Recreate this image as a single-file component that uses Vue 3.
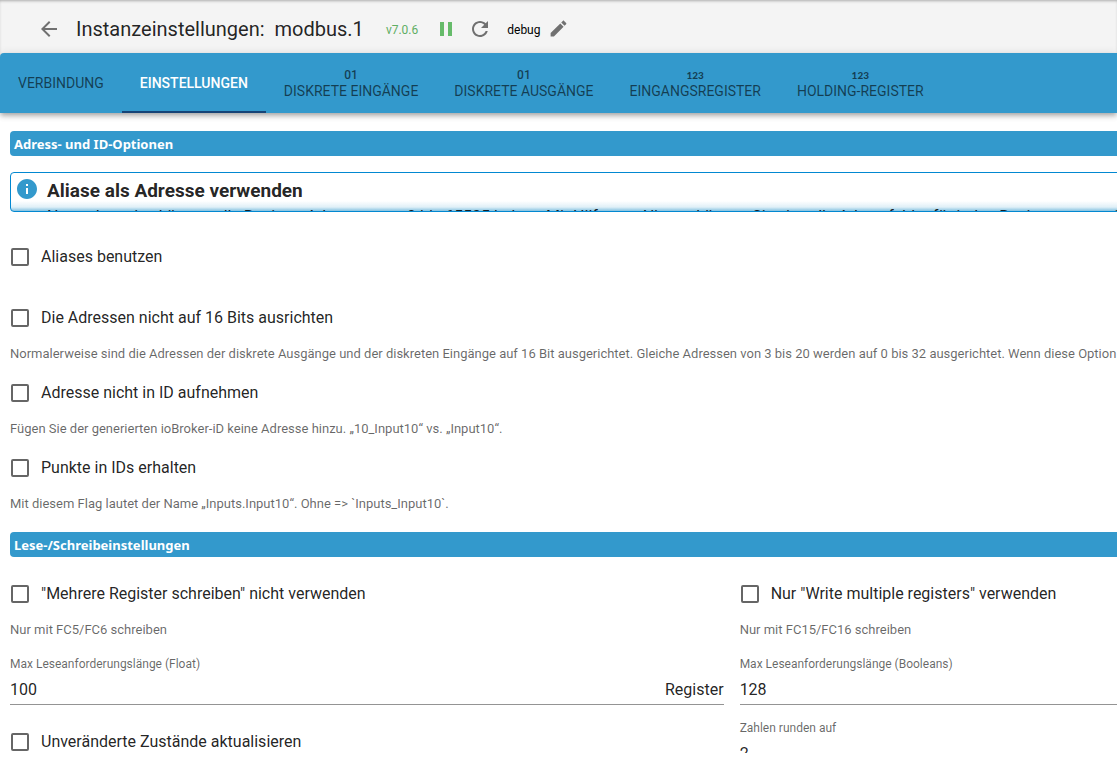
<script setup>
import { ref } from 'vue'

const tabs = [
  { label: 'Verbindung' },
  { label: 'Einstellungen' },
  { label: 'Diskrete Eingänge', mark: '01', kind: 'bits' },
  { label: 'Diskrete Ausgänge', mark: '01', kind: 'bits' },
  { label: 'Eingangsregister', mark: '123', kind: 'digits' },
  { label: 'Holding-Register', mark: '123', kind: 'digits' },
]
const active = ref(1)

const addressOptions = [
  {
    id: 'no-align',
    label: 'Die Adressen nicht auf 16 Bits ausrichten',
    help: 'Normalerweise sind die Adressen der diskrete Ausgänge und der diskreten Eingänge auf 16 Bit ausgerichtet. Gleiche Adressen von 3 bis 20 werden auf 0 bis 32 ausgerichtet. Wenn diese Option aktiviert ist, werden die Adressen nicht ausgerichtet.',
  },
  {
    id: 'no-address',
    label: 'Adresse nicht in ID aufnehmen',
    help: 'Fügen Sie der generierten ioBroker-iD keine Adresse hinzu. „10_Input10“ vs. „Input10“.',
  },
  {
    id: 'keep-dots',
    label: 'Punkte in IDs erhalten',
    help: 'Mit diesem Flag lautet der Name „Inputs.Input10“. Ohne => `Inputs_Input10`.',
  },
]

const maxFloat = ref('100')
const maxBool = ref('128')
const round = ref('2')
</script>

<template>
  <div class="page">
    <header class="toolbar">
      <button class="icon-btn back" aria-label="Zurück">
        <svg viewBox="0 0 24 24"><path d="M20 11H7.83l5.59-5.59L12 4l-8 8 8 8 1.41-1.41L7.83 13H20v-2z" /></svg>
      </button>
      <h1 class="title"><span>Instanzeinstellungen:</span><span>modbus.1</span></h1>
      <span class="version">v7.0.6</span>
      <button class="icon-btn pause" aria-label="Pause">
        <svg viewBox="0 0 24 24"><path d="M6 19h4V5H6v14zm8-14v14h4V5h-4z" /></svg>
      </button>
      <button class="icon-btn reload" aria-label="Neu starten">
        <svg viewBox="0 0 24 24"><path d="M17.65 6.35C16.2 4.9 14.21 4 12 4c-4.42 0-7.99 3.58-7.99 8s3.57 8 7.99 8c3.73 0 6.84-2.55 7.73-6h-2.08c-.82 2.33-3.04 4-5.65 4-3.31 0-6-2.69-6-6s2.69-6 6-6c1.66 0 3.14.69 4.22 1.78L13 11h7V4l-2.35 2.35z" /></svg>
      </button>
      <span class="level">debug</span>
      <button class="icon-btn edit" aria-label="Bearbeiten">
        <svg viewBox="0 0 24 24"><path d="M3 17.25V21h3.75L17.81 9.94l-3.75-3.75L3 17.25zM20.71 7.04c.39-.39.39-1.02 0-1.41l-2.34-2.34c-.39-.39-1.02-.39-1.41 0l-1.83 1.83 3.75 3.75 1.83-1.83z" /></svg>
      </button>
    </header>

    <nav class="tabs" role="tablist">
      <button
        v-for="(tab, i) in tabs"
        :key="tab.label"
        class="tab"
        :class="{ active: i === active }"
        role="tab"
        :aria-selected="i === active"
        @click="active = i"
      >
        <span v-if="tab.mark" class="mark" :class="tab.kind">{{ tab.mark }}</span>
        <span>{{ tab.label }}</span>
      </button>
    </nav>

    <main class="viewport">
      <div class="panel">
        <h2 class="section">Adress- und ID-Optionen</h2>

        <div class="alert">
          <svg class="info" viewBox="0 0 24 24"><path d="M12 2C6.48 2 2 6.48 2 12s4.48 10 10 10 10-4.48 10-10S17.52 2 12 2zm1 15h-2v-6h2v6zm0-8h-2V7h2v2z" /></svg>
          <div class="alert-body">
            <h3>Aliase als Adresse verwenden</h3>
            <p>Normalerweise können alle Register Adressen von 0 bis 65535 haben. Mit Hilfe von Aliasen können Sie virtuelle Adressfelder für jeden Registertyp von 0 bis 65535 definieren.</p>
          </div>
        </div>

        <div class="field first">
          <label class="check" for="aliases"><input id="aliases" type="checkbox" /><span>Aliases benutzen</span></label>
        </div>
        <div class="options">
          <div v-for="o in addressOptions" :key="o.id" class="field">
            <label class="check" :for="o.id"><input :id="o.id" type="checkbox" /><span>{{ o.label }}</span></label>
            <p class="help">{{ o.help }}</p>
          </div>
        </div>

        <h2 class="section">Lese-/Schreibeinstellungen</h2>

        <div class="columns">
          <div class="column">
            <div class="field">
              <label class="check" for="no-multi"><input id="no-multi" type="checkbox" /><span>"Mehrere Register schreiben" nicht verwenden</span></label>
              <p class="help">Nur mit FC5/FC6 schreiben</p>
            </div>
            <div class="text-field">
              <label for="max-float">Max Leseanforderungslänge (Float)</label>
              <div class="line"><input id="max-float" v-model="maxFloat" type="text" /><span>Register</span></div>
            </div>
            <div class="field last">
              <label class="check" for="unchanged"><input id="unchanged" type="checkbox" /><span>Unveränderte Zustände aktualisieren</span></label>
            </div>
          </div>
          <div class="column">
            <div class="field">
              <label class="check" for="only-multi"><input id="only-multi" type="checkbox" /><span>Nur "Write multiple registers" verwenden</span></label>
              <p class="help">Nur mit FC15/FC16 schreiben</p>
            </div>
            <div class="text-field">
              <label for="max-bool">Max Leseanforderungslänge (Booleans)</label>
              <div class="line"><input id="max-bool" v-model="maxBool" type="text" /></div>
            </div>
            <div class="text-field">
              <label for="round">Zahlen runden auf</label>
              <div class="line"><input id="round" v-model="round" type="text" /></div>
            </div>
          </div>
        </div>
      </div>
    </main>
  </div>
</template>

<style>
body {
  background: #fff;
}
</style>

<style scoped>
.page {
  display: flex;
  flex-direction: column;
  box-sizing: border-box;
  height: 100vh;
  padding-bottom: 12px;
  overflow: hidden;
  font-family: Roboto, "Liberation Sans", sans-serif;
  font-size: 16px;
  color: rgba(0, 0, 0, 0.87);
}
h1, h2, h3, p {
  margin: 0;
}
button {
  border: 0;
  padding: 0;
  background: none;
  font: inherit;
  color: inherit;
}

.toolbar {
  display: flex;
  flex: none;
  align-items: center;
  box-sizing: border-box;
  height: 61px;
  margin-bottom: -8px;
  padding: 4px 37px 8px;
  background: #f4f4f4;
  box-shadow: inset 0 2px 3px -1px rgba(0, 0, 0, 0.3);
}
.icon-btn {
  display: flex;
  width: 24px;
  height: 24px;
  color: #707070;
}
.icon-btn svg {
  width: 100%;
  fill: currentColor;
}
.title {
  display: flex;
  gap: 10px;
  margin-left: 15px;
  font-size: 20px;
  font-weight: 400;
  line-height: 32px;
}
.version {
  margin-left: 22px;
  padding-top: 3px;
  font-size: 12px;
  color: #5fae63;
}
.pause {
  margin-left: 16px;
  color: #66bb6a;
}
.reload {
  margin-left: 10px;
}
.level {
  margin-left: 15px;
  padding-top: 3px;
  font-size: 12px;
  color: #000;
}
.edit {
  width: 21px;
  height: 21px;
  margin-left: 8px;
}

.tabs {
  display: flex;
  flex: none;
  height: 60px;
  position: relative;
  border-radius: 4px 0 0 0;
  background: #3399cc;
  box-shadow: 0 2px 4px -1px rgba(0, 0, 0, 0.2), 0 4px 5px rgba(0, 0, 0, 0.14), 0 1px 10px rgba(0, 0, 0, 0.12);
}
.tab {
  display: flex;
  flex-direction: column;
  align-items: center;
  justify-content: center;
  box-sizing: border-box;
  padding: 0 18px;
  border-top: 2px solid transparent;
  border-bottom: 2px solid transparent;
  font-size: 14px;
  line-height: 17px;
  text-transform: uppercase;
  white-space: nowrap;
  color: rgba(0, 0, 0, 0.6);
}
.tab.active {
  border-bottom-color: #164477;
  font-weight: 500;
  color: #fff;
}
.mark {
  line-height: 16px;
  font-weight: 500;
}
.bits {
  font-size: 12px;
}
.digits {
  font-family: Lato, sans-serif;
  font-size: 10px;
  font-weight: 900;
}

.viewport {
  flex: 1;
  min-height: 0;
  overflow: hidden;
  position: relative;
  z-index: -1;
}
.panel {
  box-sizing: border-box;
  width: 131%;
  padding: 18px 10px 0;
}
.section {
  padding: 2px 4px 0;
  border-radius: 4px;
  background: #3399cc;
  font-family: "Noto Sans", "Open Sans", sans-serif;
  font-size: 13px;
  font-weight: 700;
  line-height: 23px;
  color: #fff;
}
.alert {
  display: flex;
  box-sizing: border-box;
  height: 40px;
  margin: 16px 0 24px;
  padding: 4px;
  border: 1px solid #0288d1;
  border-radius: 4px;
  overflow: hidden;
  background: linear-gradient(to top, rgba(51, 153, 204, 0.6), rgba(51, 153, 204, 0.15) 4px, transparent 10px);
}
.info {
  flex: none;
  width: 24px;
  height: 24px;
  fill: #3399cc;
}
.alert-body {
  margin-left: 8px;
  white-space: nowrap;
}
.alert-body h3 {
  font-size: 19px;
  font-weight: 700;
  line-height: 28px;
}
.alert-body p {
  margin-top: 2px;
  font-size: 16px;
  line-height: 20px;
}

.check {
  display: flex;
  align-items: center;
  height: 42px;
  white-space: nowrap;
}
.check span {
  padding-bottom: 2px;
}
.check input {
  appearance: none;
  box-sizing: border-box;
  width: 18px;
  height: 18px;
  margin: 0 12px 0 1px;
  border: 2px solid #666;
  border-radius: 2px;
}
.help {
  margin-top: 5px;
  font-size: 13px;
  line-height: 20px;
  white-space: nowrap;
  color: rgba(0, 0, 0, 0.6);
}
.first {
  margin-bottom: 19px;
}
.options {
  display: flex;
  flex-direction: column;
  gap: 8px;
  margin-bottom: 18px;
}
.columns {
  display: grid;
  grid-template-columns: 1fr 1fr;
  gap: 16px;
  padding-top: 16px;
}
.text-field {
  margin-top: 13px;
}
.field + .text-field {
  margin-top: 14px;
}
.text-field > label {
  display: block;
  font-size: 12px;
  line-height: 20px;
  color: rgba(0, 0, 0, 0.6);
}
.line {
  display: flex;
  align-items: center;
  height: 30px;
  border-bottom: 1px solid #949494;
}
.line input {
  flex: 1;
  min-width: 0;
  padding: 0;
  border: 0;
  outline: 0;
  background: none;
  font: inherit;
  color: inherit;
}
.last {
  margin-top: 16px;
}
</style>
